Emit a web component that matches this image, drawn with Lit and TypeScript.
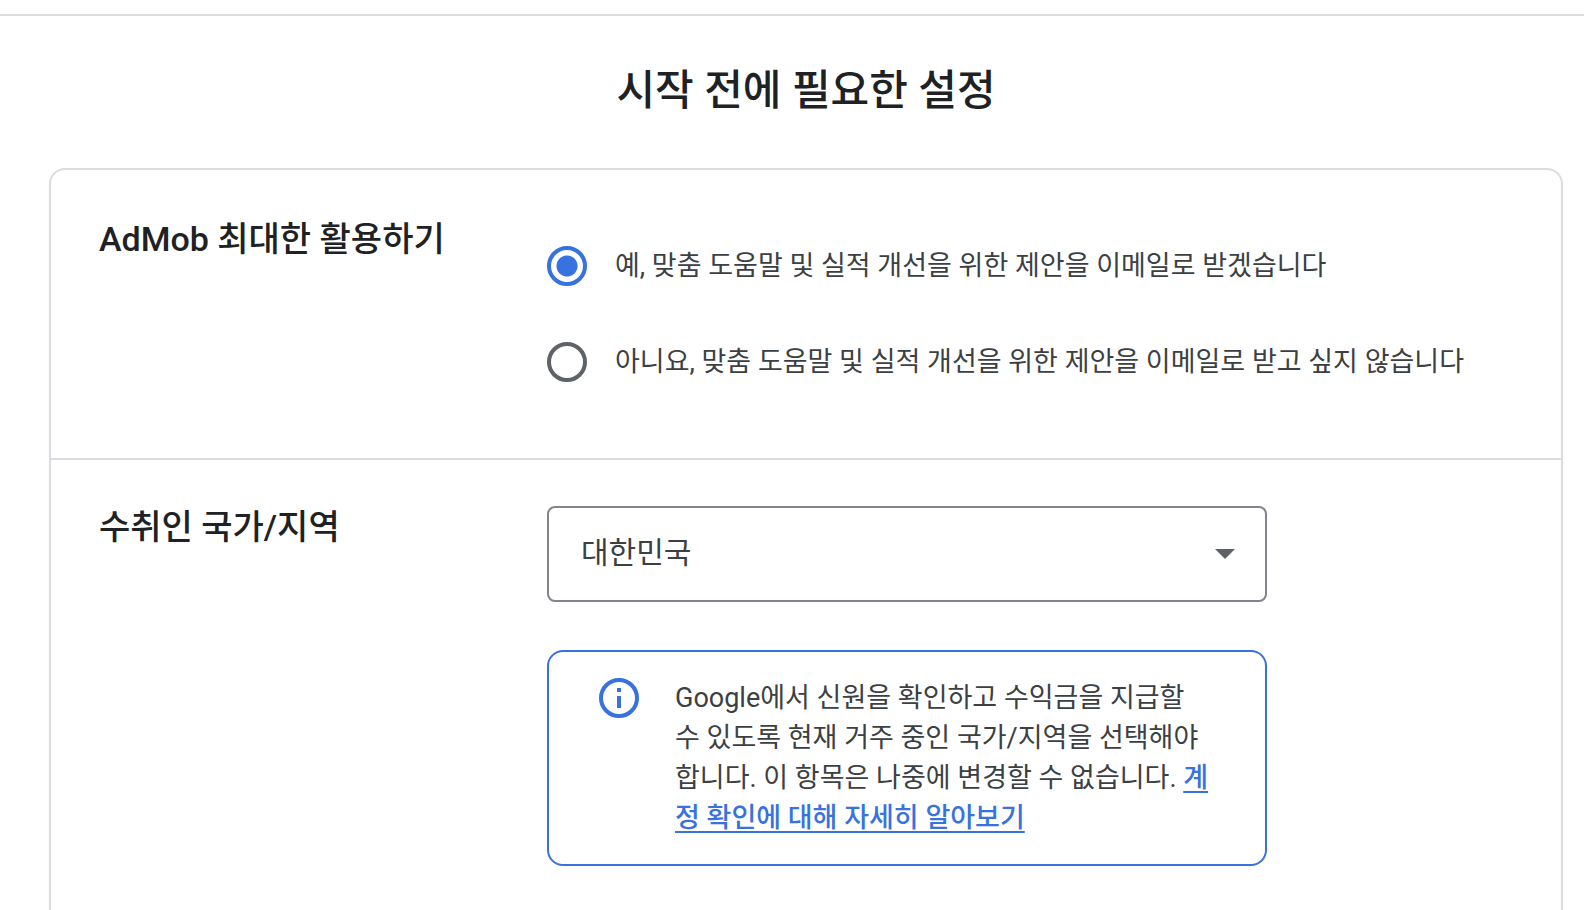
import { LitElement, html, css } from "lit";
import { customElement, state } from "lit/decorators.js";

@customElement("app-root")
export class AppRoot extends LitElement {
  static styles = css`
    :host {
      display: block;
      height: 100vh;
      overflow: hidden;
      background: #fff;
      color: #202124;
      font-family: Roboto, "Noto Sans CJK KR", sans-serif;
    }
    * { box-sizing: border-box; }
    .bar { height: 16px; border-bottom: 2px solid #dadce0; }
    main { padding: 48px 21px 0 49px; }
    h1 {
      margin: 0 0 50px;
      font-size: 42px;
      line-height: 54px;
      font-weight: 500;
      text-align: center;
    }
    .card {
      border: 2px solid #dadce0;
      border-radius: 16px;
    }
    .section {
      display: grid;
      grid-template-columns: 448px minmax(0, 1fr);
      padding: 48px;
    }
    .section + .section {
      min-height: 600px;
      padding-top: 46px;
      border-top: 2px solid #dadce0;
    }
    h2 { margin: 0; font-size: 34px; line-height: 42px; font-weight: 500; }
    fieldset { border: 0; margin: 0; padding: 0; min-width: 0; }
    .option {
      display: flex;
      align-items: center;
      gap: 28px;
      height: 96px;
      font-size: 27px;
      line-height: 42px;
      color: #3c4043;
      white-space: nowrap;
    }
    .radio {
      appearance: none;
      flex: none;
      width: 40px;
      height: 40px;
      margin: 0;
      border: 4px solid #5f6368;
      border-radius: 50%;
    }
    .radio:checked {
      border-color: #3871e0;
      background: radial-gradient(circle, #3871e0 10px, transparent 11px);
    }
    .fields { max-width: 720px; }
    .picker { display: grid; align-items: center; }
    .picker > * { grid-area: 1 / 1; }
    select {
      appearance: none;
      width: 100%;
      height: 96px;
      padding: 0 32px 4px;
      border: 2px solid #80868b;
      border-radius: 8px;
      background: #fff;
      color: #3c4043;
      font: inherit;
      font-size: 30px;
    }
    .arrow { justify-self: end; margin-right: 32px; pointer-events: none; }
    .note {
      display: flex;
      gap: 36px;
      margin-top: 48px;
      padding: 26px 50px;
      border: 2px solid #3871e0;
      border-radius: 16px;
    }
    .info { flex: none; }
    p { margin: 0; font-size: 27px; line-height: 40px; color: #3c4043; }
    a { color: #3871e0; font-weight: 500; text-decoration-thickness: 2px; text-underline-offset: 4px; }
  `;

  @state() private choice = "yes";

  private option(value: string, text: string) {
    return html`<label class="option">
      <input class="radio" type="radio" name="emails" .checked=${this.choice === value}
        @change=${() => (this.choice = value)} />
      <span>${text}</span>
    </label>`;
  }

  render() {
    return html`
      <div class="bar"></div>
      <main>
        <h1>시작 전에 필요한 설정</h1>
        <div class="card">
          <section class="section">
            <h2 id="emails">AdMob 최대한 활용하기</h2>
            <fieldset aria-labelledby="emails">
              ${this.option("yes", "예, 맞춤 도움말 및 실적 개선을 위한 제안을 이메일로 받겠습니다")}
              ${this.option("no", "아니요, 맞춤 도움말 및 실적 개선을 위한 제안을 이메일로 받고 싶지 않습니다")}
            </fieldset>
          </section>
          <section class="section">
            <h2><label for="country">수취인 국가/지역</label></h2>
            <div class="fields">
              <div class="picker">
                <select id="country"><option>대한민국</option></select>
                <svg class="arrow" width="20" height="10" viewBox="0 0 20 10" aria-hidden="true"><path d="M0 0h20L10 10z" fill="#5f6368" /></svg>
              </div>
              <div class="note">
                <svg class="info" width="40" height="40" viewBox="0 0 40 40" fill="none" aria-hidden="true">
                  <circle cx="20" cy="20" r="18" stroke="#3871e0" stroke-width="4" />
                  <path d="M18 18h4v12h-4zM18 10h4v4h-4z" fill="#3871e0" />
                </svg>
                <p>Google에서 신원을 확인하고 수익금을 지급할 수 있도록 현재 거주 중인 국가/지역을 선택해야 합니다. 이 항목은 나중에 변경할 수 없습니다. <a href="#verify">계정 확인에 대해 자세히 알아보기</a></p>
              </div>
            </div>
          </section>
        </div>
      </main>
    `;
  }
}
